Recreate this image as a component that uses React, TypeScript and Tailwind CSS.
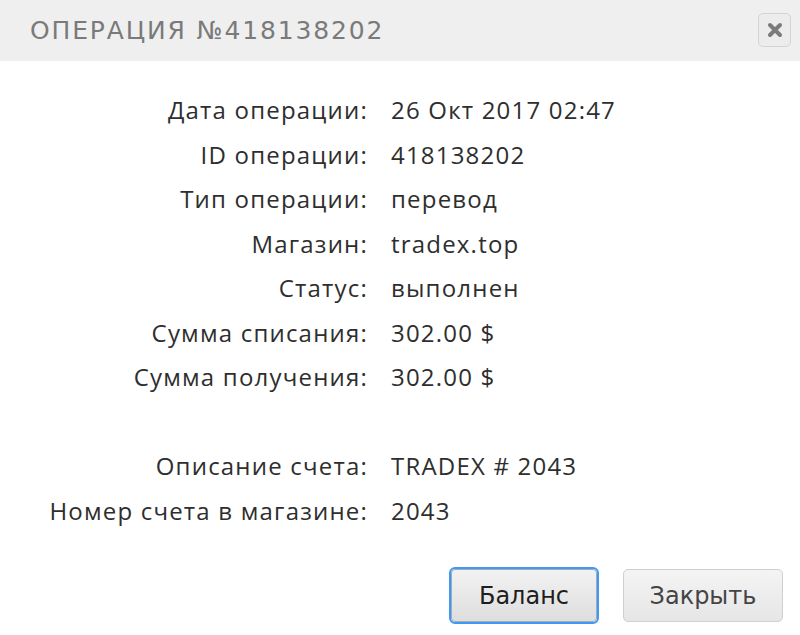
import React from "react";

const rows: [string, string][] = [
  ["Дата операции:", "26 Окт 2017 02:47"],
  ["ID операции:", "418138202"],
  ["Тип операции:", "перевод"],
  ["Магазин:", "tradex.top"],
  ["Статус:", "выполнен"],
  ["Сумма списания:", "302.00 $"],
  ["Сумма получения:", "302.00 $"],
  ["", ""],
  ["Описание счета:", "TRADEX # 2043"],
  ["Номер счета в магазине:", "2043"],
];

export default function App() {
  return (
    <div className="w-[800px] h-[635px] bg-white flex flex-col overflow-hidden">
      <div className="h-[61px] bg-[#efefef] flex items-center justify-between pl-[30px] pr-[9px]">
        <div
          className="text-[25px] text-[#7a7a7a] tracking-[1.85px] leading-none"
          style={{ fontFamily: '"DejaVu Sans", sans-serif' }}
        >
          ОПЕРАЦИЯ №418138202
        </div>
        <div className="w-[33px] h-[34px] mt-[-2px] rounded-[5px] border border-[#d4d4d4] bg-[#ececec] flex items-center justify-center">
          <svg width="16" height="16" viewBox="0 0 16 16">
            <path d="M3 3 L13 13 M13 3 L3 13" stroke="#7a7a7a" strokeWidth="4" strokeLinecap="round" />
          </svg>
        </div>
      </div>
      <div
        className="grid grid-cols-[365px_1fr] gap-x-[26px] pt-[27px] text-[24px] text-[#2e2e2e] tracking-[1.2px]"
        style={{ fontFamily: '"Open Sans", sans-serif' }}
      >
        {rows.map(([l, v], i) => (
          <React.Fragment key={i}>
            <div className="h-[44.5px] flex items-center justify-end mr-[-3px]">{l}</div>
            <div className="h-[44.5px] flex items-center">{v}</div>
          </React.Fragment>
        ))}
      </div>
      <div className="flex justify-end gap-[26px] pr-[17px] mt-auto mb-[13px]" style={{ fontFamily: '"DejaVu Sans", sans-serif' }}>
        <button className="w-[146px] h-[53px] rounded-[4px] border border-[#aaa] bg-gradient-to-b from-[#f2f2f2] to-[#dedede] text-[24px] text-[#1e1e1e] outline outline-2 outline-[#3b99fc]">
          Баланс
        </button>
        <button className="w-[160px] h-[53px] rounded-[5px] border border-[#cfcfcf] bg-gradient-to-b from-[#f4f4f4] to-[#e6e6e6] text-[24px] text-[#444]">
          Закрыть
        </button>
      </div>
    </div>
  );
}
